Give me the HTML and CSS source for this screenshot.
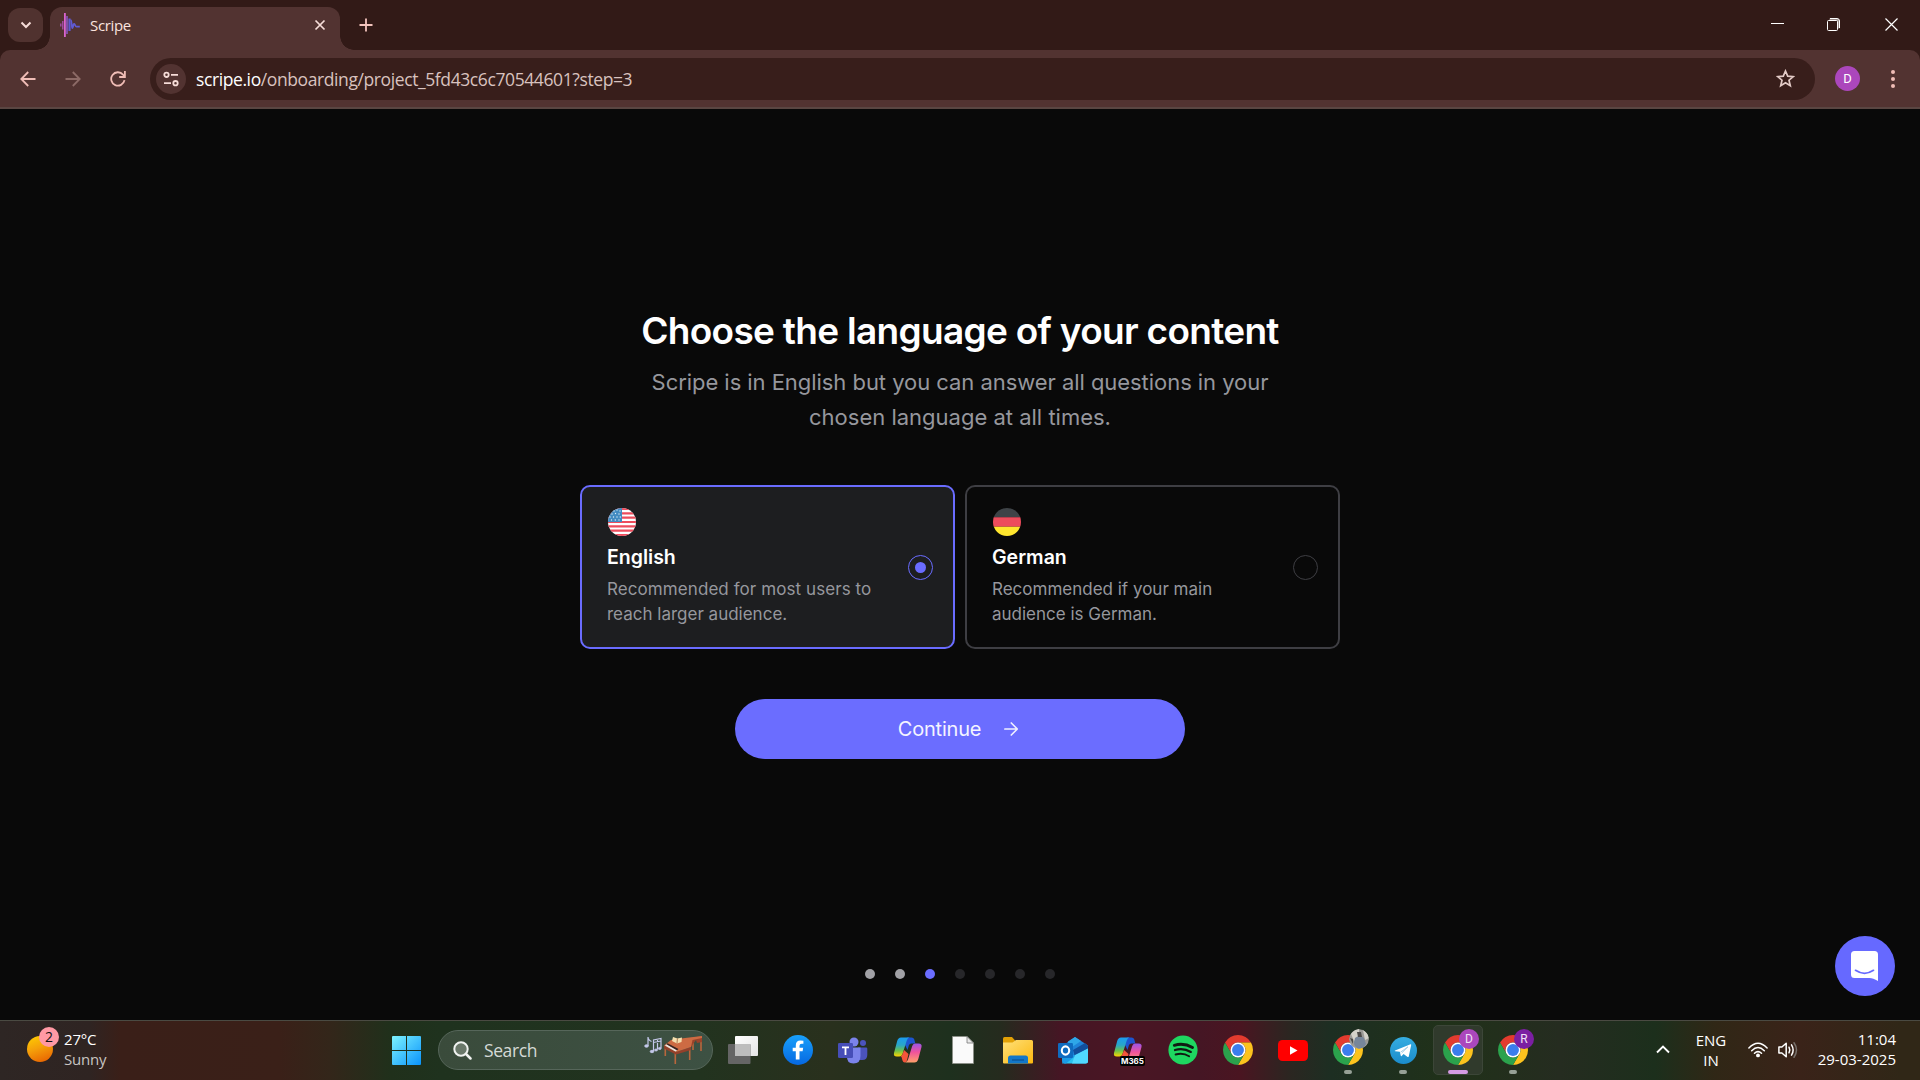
FILE: index.html
```html
<!DOCTYPE html>
<html lang="en">
<head>
<meta charset="utf-8">
<title>Scripe</title>
<link rel="stylesheet" href="styles.css">
</head>
<body>
<svg class="defs" width="0" height="0" aria-hidden="true">
  <defs>
    <linearGradient id="cpA" x1="0" y1="0" x2="0" y2="1"><stop offset="0" stop-color="#1b9cf0"/><stop offset=".4" stop-color="#2aa6c8"/><stop offset=".7" stop-color="#6cc24a"/><stop offset="1" stop-color="#ffd400"/></linearGradient>
    <linearGradient id="cpB" x1="0" y1="0" x2="0" y2="1"><stop offset="0" stop-color="#9a55e8"/><stop offset=".45" stop-color="#f0529c"/><stop offset="1" stop-color="#ffa06a"/></linearGradient>
    <symbol id="chrome" viewBox="2 2 44 44">
      <path fill="#e33b2e" d="M4.95 13A22 22 0 0 1 43.05 13H24A11 11 0 0 0 14.47 29.5Z"/>
      <path fill="#fcc31e" d="M43.05 13A22 22 0 0 1 24 46L33.53 29.5A11 11 0 0 0 24 13Z"/>
      <path fill="#2ba24c" d="M24 46A22 22 0 0 1 4.95 13L14.47 29.5A11 11 0 0 0 33.53 29.5Z"/>
      <circle cx="24" cy="24" r="11" fill="#fff"/><circle cx="24" cy="24" r="8.7" fill="#3b7ded"/>
    </symbol>
    <symbol id="copilot" viewBox="0 0 30 26">
      <path fill="#1d55d0" d="M14 0.5h4.5q2.2 0 2.8 2l1 4h-4q-1.8 0-2.4 1.8L14.5 13 11 6Z"/>
      <path fill="url(#cpA)" d="M8 .5h8.500q-2 .5-2.800 3.200L9.500 17q-.8 2.500-3.200 2.500H3.800Q.3 19.500 1 16L4.200 4Q5.200.5 8 .5Z"/>
      <path fill="#f4553a" d="M7.500 19.500Q9 19 9.800 16.500L11 13l4.500 4-1.200 5q-.7 3.500-2.600 3.500-1.700 0-2.200-2L8.500 20Z"/>
      <path fill="url(#cpB)" d="M22 6.500h3.500q3.800 0 3 3.500L25.300 22q-1 3.500-4 3.500h-9q2-.5 2.800-3.200L19.200 9q.8-2.500 2.800-2.500Z"/>
    </symbol>
  </defs>
</svg>

<header class="browser">
  <div class="tabstrip">
    <button class="tab-search"><svg width="12" height="8" viewBox="0 0 12 8"><path d="M1.500 1.500 6 6l4.500-4.500" fill="none" stroke="#f6dcd8" stroke-width="2"/></svg></button>
    <div class="tab">
      <svg class="favicon" width="20" height="24" viewBox="0 0 20 24" fill="none" stroke-width="1.300"><path stroke="#a94fb0" d="M.8 10.500v3M2.800 8v8.500"/><path stroke="#e067d8" stroke-width="1.700" d="M4.900 0v24"/><path stroke="#8a58c0" stroke-width="1.600" d="M7 3v18"/><path stroke="#5f5ad2" stroke-width="2.200" d="M9.500 5.500v12.500"/><path stroke="#5f5ad2" stroke-width="1.700" d="M10.500 7q1 0 1.200 4.500.3 4 .8 3.500.7-.5 1-3.500.6-1.500 1.300 0 .9 2.500 2.200 2.200h2.800"/></svg>
      <span class="tab-title">Scripe</span>
      <svg class="tab-close" width="12" height="12" viewBox="0 0 12 12"><path d="M1.500 1.500l9 9M10.500 1.500l-9 9" stroke="#f6dcd8" stroke-width="1.700"/></svg>
    </div>
    <svg class="new-tab" width="14" height="14" viewBox="0 0 14 14"><path d="M7 .5v13M.5 7h13" stroke="#f3c4bd" stroke-width="1.800"/></svg>
    <div class="window-controls">
      <svg width="13" height="13" viewBox="0 0 13 13"><path d="M0 5.500h13" stroke="#fff"/></svg>
      <svg width="13" height="13" viewBox="0 0 13 13" fill="none"><path d="M2.500 1.500h7q2 0 2 2v7" stroke="#998a88" stroke-width="2"/><path d="M3 .5h7q2.500 0 2.500 2.500v7M.5 3.500q0-1 1-1h8q1 0 1 1v8q0 1-1 1h-8q-1 0-1-1Z" stroke="#fff"/></svg>
      <svg width="13" height="13" viewBox="0 0 13 13"><path d="M.5.5l12 12M12.500.5l-12 12" stroke="#fff" stroke-width="1.200"/></svg>
    </div>
  </div>
  <div class="toolbar">
    <svg width="16" height="16" viewBox="0 0 16 16" fill="none" stroke="#f0bdb6" stroke-width="1.800"><path d="M15.500 8H1.500M8.200 1 1.300 8l6.900 7"/></svg>
    <svg width="16" height="16" viewBox="0 0 16 16" fill="none" stroke="#8c6a66" stroke-width="1.800"><path d="M.5 8h14M7.800 1l6.900 7-6.900 7"/></svg>
    <svg width="16" height="16" viewBox="0 0 16 16" fill="none" stroke="#f0bdb6" stroke-width="1.800"><path d="M14.500 9.200A6.700 6.700 0 1 1 13 3.600L14.800 5.500M14.900 0v6H9.200"/></svg>
    <div class="omnibox">
      <span class="site-info"><svg width="16" height="16" viewBox="0 0 16 16" fill="none" stroke="#f6dcd8" stroke-width="1.800"><circle cx="3.500" cy="3.800" r="2.200"/><path d="M8 3.800h7M1 12.200h7"/><circle cx="12.500" cy="12.200" r="2.200"/></svg></span>
      <span class="url"><b>scripe.io</b>/onboarding/project_5fd43c6c70544601?step=3</span>
      <svg class="star" width="19" height="19" viewBox="0 0 19 19"><path d="M9.500 2l2.200 5.100 5.500.5-4.200 3.600 1.300 5.500-4.800-2.900-4.800 2.900L6 11.200 1.800 7.600l5.500-.5Z" fill="none" stroke="#e2cac6" stroke-width="1.700"/></svg>
    </div>
    <span class="profile">D</span>
    <svg class="menu" width="4" height="18" viewBox="0 0 4 18" fill="#f0bdb6"><circle cx="2" cy="2" r="2"/><circle cx="2" cy="9" r="2"/><circle cx="2" cy="16" r="2"/></svg>
  </div>
</header>

<main class="page">
  <h1>Choose the language of your content</h1>
  <p class="subtitle"><span class="lead">Scripe is in English but you can answer all questions in your</span><br>chosen language at all times.</p>
  <div class="options">
    <div class="card selected">
      <div class="card-text">
        <svg class="flag" width="28" height="28" viewBox="0 0 28 28"><clipPath id="round"><circle cx="14" cy="14" r="14"/></clipPath><g clip-path="url(#round)"><path fill="#fff" d="M0 0h28v28H0z"/><path stroke="#ed4c5c" stroke-width="2.150" d="M0 1h28M0 5.300h28M0 9.600h28M0 14h28M0 18.300h28M0 22.600h28M0 27h28"/><path fill="#428bc1" d="M0 0h14v14H0z"/><g fill="#dcebf6"><circle cx="6" cy="3" r=".7"/><circle cx="9" cy="2" r=".7"/><circle cx="12" cy="3" r=".7"/><circle cx="4" cy="6" r=".7"/><circle cx="7.500" cy="5.500" r=".7"/><circle cx="11" cy="6" r=".7"/><circle cx="2" cy="9" r=".7"/><circle cx="5.500" cy="9" r=".7"/><circle cx="9" cy="9" r=".7"/><circle cx="12.300" cy="9" r=".7"/><circle cx="3.500" cy="12" r=".7"/><circle cx="7.300" cy="12" r=".7"/><circle cx="11" cy="12" r=".7"/></g></g></svg>
        <h2>English</h2>
        <p><span class="wide">Recommended for most users to</span><br>reach larger audience.</p>
      </div>
      <span class="radio"></span>
    </div>
    <div class="card">
      <div class="card-text">
        <svg class="flag" width="28" height="28" viewBox="0 0 28 28"><g clip-path="url(#round)"><path fill="#3e4347" d="M0 0h28v9.300H0z"/><path fill="#ed4c5c" d="M0 9.300h28v9.400H0z"/><path fill="#ffe62e" d="M0 18.700h28V28H0z"/></g></svg>
        <h2>German</h2>
        <p>Recommended if your main<br>audience is German.</p>
      </div>
      <span class="radio"></span>
    </div>
  </div>
  <button class="continue"><span>Continue</span><svg width="14" height="14" viewBox="0 0 14 14" fill="none" stroke="#f0f0ff" stroke-width="1.700" stroke-linecap="round" stroke-linejoin="round"><path d="M.9 7h12.200M7.300 1l6 6-6 6"/></svg></button>
  <div class="steps"><i class="done"></i><i class="done"></i><i class="now"></i><i></i><i></i><i></i><i></i></div>
  <div class="chat"><svg width="28" height="30" viewBox="0 0 28 30"><path fill="#fff" d="M3.500 0h20Q27 0 27 3.500V30q-5-3-8.500-3h-15Q0 27 0 23.500v-20Q0 0 3.500 0Z"/><path d="M4.500 19.300q9 6 18 0" fill="none" stroke="#6669ff" stroke-width="1.700" stroke-linecap="round"/></svg></div>
</main>

<footer class="taskbar">
  <div class="weather">
    <span class="sun"><span class="count">2</span></span>
    <div class="weather-text"><span class="temp">27°C</span><span class="cond">Sunny</span></div>
  </div>
  <svg class="start" width="29" height="29" viewBox="0 0 29 29"><defs><linearGradient id="win" gradientUnits="userSpaceOnUse" x1="0" y1="0" x2="29" y2="29"><stop offset="0" stop-color="#7df3ff"/><stop offset="1" stop-color="#0a93fb"/></linearGradient></defs><path fill="url(#win)" d="M1 0h13v14H0V1q0-1 1-1ZM15 0h13q1 0 1 1v13H15ZM0 15h14v14H1q-1 0-1-1ZM15 15h14v13q0 1-1 1H15Z"/></svg>
  <div class="search">
    <svg width="19" height="19" viewBox="0 0 19 19" fill="none" stroke="#f1f3f1"><circle cx="8" cy="8" r="6.700" fill="#6a786a" stroke-width="2"/><path d="M13 13l4.500 4.500" stroke-width="2.500" stroke-linecap="round"/></svg>
    <span class="search-label">Search</span>
    <svg class="piano" width="59" height="30" viewBox="0 0 59 30">
      <g fill="#c4c8ea" stroke="#c4c8ea" stroke-width=".8"><path fill="none" stroke-width="1.200" d="M5 11V2q0 3 3.500 4.500M10.500 16V5l7.500-1.500v9.500M14.500 14.500V5M10.500 7.500l7.500-1.500"/><ellipse cx="3.500" cy="11" rx="1.800" ry="1.300"/><ellipse cx="9" cy="16.500" rx="1.800" ry="1.200"/><ellipse cx="13" cy="15" rx="1.500" ry="1"/><ellipse cx="16.700" cy="13.500" rx="1.500" ry="1"/></g>
      <path stroke="#b9663c" stroke-width="1.600" d="M22.300 13v8M32.300 18v11M46.700 13v12M58 6v10M50 8v7"/>
      <path fill="#94402a" d="M21 10.500l12 6.500v2.500l-12-6ZM33 17l15-5v3l-15 4.500Z"/>
      <path fill="#9a432a" d="M47 3l12-2v6l-5 1-1-3-5 7Z"/>
      <path fill="#cd6b43" d="M21 10.500l12 6.500 15-5 1.500-7L59 3V1L42 3 28 5Z"/>
      <path fill="#e9e6e4" d="M22 10.500l1.500-1.300 10.500 6-1.500 1.200Z"/><path fill="#352421" d="M23.500 9.200l1-.9L35.500 14l-1.500 1.200Z"/>
      <path fill="#f4dfae" d="M30 2l4.500 1.500L39 2.500l-.5 4.500-4.500 1.500-5-2.500Z"/><path stroke="#9a5b35" stroke-width=".8" d="M34.400 3.500 34 8.300"/>
    </svg>
  </div>
  <div class="apps">
    <span class="app"><svg width="30" height="28" viewBox="0 0 30 28"><defs><linearGradient id="tv" x1="0" y1="0" x2="1" y2="1"><stop offset="0" stop-color="#fff"/><stop offset="1" stop-color="#e4e4e4"/></linearGradient></defs><rect x="7" y="0" width="23" height="20" rx="1" fill="url(#tv)"/><rect x="0" y="8" width="22.500" height="20" rx="1" fill="#656565"/><path fill="#bdbdbd" d="M7 8h15.500v12H7z"/></svg></span>
    <span class="app"><svg width="30" height="30" viewBox="0 0 30 30"><defs><linearGradient id="fb" x1="0" y1="0" x2="0" y2="1"><stop offset="0" stop-color="#18a0fb"/><stop offset="1" stop-color="#0668e1"/></linearGradient></defs><circle cx="15" cy="15" r="15" fill="url(#fb)"/><path fill="#fff" d="M12.800 24.500v-8.300H9.700v-3.500h3.100v-2.500q0-4.700 4.600-4.700 1.600 0 3 .3v3h-1.700q-2.200 0-2.200 2v1.900h3.700l-.6 3.500h-3.100v8.300Z"/></svg></span>
    <span class="app"><svg width="30" height="27" viewBox="0 0 30 27"><circle cx="25" cy="6" r="3" fill="#4b53bc"/><circle cx="16" cy="5" r="4.500" fill="#7b83eb"/><path fill="#4b53bc" d="M20 10.500h8q1.300 0 1.300 1.300V18q0 5-5 5H20Z"/><path fill="#7b83eb" d="M9 10.500h13.500V19q0 7.500-7 7.500T9 19Z"/><rect x="0" y="6" width="15" height="15" rx="1.300" fill="#464eb8"/><path fill="#fff" d="M4 9.500h7v1.700H8.400V18H6.600v-6.800H4Z"/></svg></span>
    <span class="app"><svg width="30" height="26"><use href="#copilot"/></svg></span>
    <span class="app"><svg width="22" height="28" viewBox="0 0 22 28"><path fill="#fafafa" stroke="#8b8f88" stroke-width=".8" d="M.5.500h14.500l6.500 6.500v20.500H.5Z"/><path fill="#e8e8e8" stroke="#777" stroke-width=".8" d="M15 .5V7h6.500Z"/></svg></span>
    <span class="app"><svg width="30" height="27" viewBox="0 0 30 27"><defs><linearGradient id="fd" x1="0" y1="0" x2="1" y2="1"><stop offset="0" stop-color="#ffe07a"/><stop offset="1" stop-color="#fbb80f"/></linearGradient></defs><path fill="#e2a006" d="M0 1.500Q0 0 1.500 0H9l3.500 4v3H0Z"/><path fill="url(#fd)" d="M0 5.500h9.500L13 3h15.500Q30 3 30 4.500v21q0 1-1 1H1q-1 0-1-1Z"/><path fill="#1277c9" d="M5 26.500V21q0-2.500 2.500-2.500h15q2.500 0 2.500 2.500v5.500Z"/><path stroke="#0b4f91" stroke-width="1.200" d="M9 23h12"/></svg></span>
    <span class="app"><svg width="30" height="27" viewBox="0 0 30 27"><path fill="#1f83d8" d="M5 8.500 17 0l13 8.500-14 10Z"/><path fill="#2ea7e8" d="M10 4.500 17 0l6 4-12 8Z"/><path fill="#124f9c" d="M15 13 27 6l3 3v4l-13 7Z"/><path fill="#28c3f0" d="M4 26.500 30 11.500V24q0 2.500-2.500 2.500H6.500Q4 26.500 4 24Z"/><path fill="#1a9be6" d="M4 14l14 4.500L8 26.500H6.500Q4 26.500 4 24Z"/><path fill="#50d9ff" d="M17 18l13-6.500V24q0 2.500-2.500 2.500H14Z"/><rect y="6" width="15" height="15" rx="1.300" fill="#0f6cc0"/><ellipse cx="7.500" cy="13.500" rx="3.700" ry="4.100" fill="none" stroke="#fff" stroke-width="2.100"/></svg></span>
    <span class="app"><svg width="30" height="26"><use href="#copilot"/></svg><span class="m365">M365</span></span>
    <span class="app"><svg width="30" height="30" viewBox="0 0 30 30"><circle cx="15" cy="15" r="14.600" fill="#1ed760"/><path fill="none" stroke="#101a12" stroke-linecap="round" d="M6.300 10.300q9.500-2.800 18.200 2.200" stroke-width="2.900"/><path fill="none" stroke="#101a12" stroke-linecap="round" d="M7 15q8.500-2.400 15.800 1.900" stroke-width="2.300"/><path fill="none" stroke="#101a12" stroke-linecap="round" d="M7.600 19.500q7.500-2 13.500 1.700" stroke-width="1.900"/></svg></span>
    <span class="app"><svg width="30" height="30"><use href="#chrome"/></svg></span>
    <span class="app"><svg width="30" height="21" viewBox="0 0 30 21"><rect width="30" height="21" rx="4.500" fill="#f00"/><path fill="#fff" d="M12 6.300v8.400l7.500-4.200Z"/></svg></span>
    <span class="app running"><svg width="30" height="30"><use href="#chrome"/></svg><svg class="badge" width="20" height="20" viewBox="0 0 20 20"><circle cx="10" cy="10" r="10" fill="#9b9a97"/><path fill="#d4d2ca" d="M2 5q4-5 8-5v7L5 12ZM14 1q5 3 6 8l-4 2Z"/><path fill="#77869a" d="M6 9q5-4 9 0l2 6q-3 5-8 4.500Q5 17 5 14Z"/><path fill="#4c4a48" d="M8 3h4l1 5H9ZM1 9l3 1v5Z"/></svg></span>
    <span class="app running"><svg width="27" height="27" viewBox="0 0 27 27"><defs><linearGradient id="tg" x1="0" y1="0" x2="0" y2="1"><stop offset="0" stop-color="#35ade1"/><stop offset="1" stop-color="#1b8ccb"/></linearGradient></defs><circle cx="13.500" cy="13.500" r="13.500" fill="url(#tg)"/><path fill="#fff" d="M5 13.500 20.500 7.300Q21.300 7 21.200 8l-2.400 11.200q-.4 1.300-1.500.6l-3.700-2.700-2 1.900q-.6.500-.8-.3l-1-4-4.600-.5Q4.300 14 5 13.500Z"/><path stroke="#a9cfe6" d="M10.500 15.200l7.500-5.400-6.300 6.200"  fill="none"/></svg></span>
    <span class="app running active"><svg width="30" height="30"><use href="#chrome"/></svg><span class="badge purple">D</span></span>
    <span class="app running"><svg width="30" height="30"><use href="#chrome"/></svg><span class="badge violet">R</span></span>
  </div>
  <div class="tray">
    <svg class="caret" width="14" height="9" viewBox="0 0 14 9"><path d="M1 7.500 7 1.500l6 6" fill="none" stroke="#fff" stroke-width="1.900"/></svg>
    <div class="lang"><span>ENG</span><span>IN</span></div>
    <svg class="wifi" width="20" height="16" viewBox="0 0 20 16" fill="none" stroke="#fff" stroke-width="1.500" stroke-linecap="round"><path d="M.9 6q9.100-9.500 18.200 0M3.700 8.700q6.300-6.300 12.600 0M6.500 11.300q3.500-3.400 7 0"/><circle cx="10" cy="13.400" r="1.200" fill="#fff"/></svg>
    <svg class="volume" width="20" height="18" viewBox="0 0 20 18" fill="none" stroke="#fff" stroke-width="1.500" stroke-linecap="round" stroke-linejoin="round"><path d="M.9 6v6h3l4.300 3.800V2.200L3.900 6ZM11 6.200q1.600 2.800 0 5.600M13.500 3.800q3.300 5.200 0 10.400"/><path stroke="#77706b" d="M16 1.800q5 7.200 0 14.400"/></svg>
    <div class="clock"><span class="time">11:04</span><span class="date">29-03-2025</span></div>
  </div>
</footer>
</body>
</html>
```
FILE: styles.css
```css
* { box-sizing: border-box; }
body { margin: 0; width: 1920px; height: 1080px; overflow: hidden; background: #090909; display: flex; flex-direction: column; font-family: "Open Sans", "Noto Sans", sans-serif; color: #fff; }
svg { display: block; flex: none; }
.defs { position: absolute; }
button { border: 0; padding: 0; font: inherit; color: inherit; }
h1, h2, p { margin: 0; font-weight: 400; }

/* Browser frame */
.browser { flex: none; height: 109px; background: #321a17; }
.tabstrip { height: 50px; display: flex; align-items: flex-start; padding-left: 8px; }
.tab-search { width: 35px; height: 34px; margin-top: 8px; border-radius: 12px; background: #50322f; display: flex; align-items: center; justify-content: center; }
.tab { position: relative; width: 290px; height: 43px; margin: 7px 0 0 7px; padding: 0 14px 8px 10px; border-radius: 12px 12px 0 0; background: #523331; display: flex; align-items: center; }
.tab::before, .tab::after { content: ""; position: absolute; bottom: 0; width: 14px; height: 14px; }
.tab::before { left: -14px; background: radial-gradient(circle at 0 0, transparent 13.500px, #523331 14px); }
.tab::after { right: -14px; background: radial-gradient(circle at 100% 0, transparent 13.500px, #523331 14px); }
.tab-title { flex: 1; margin-left: 10px; font-size: 15px; line-height: 20px; letter-spacing: -.35px; color: #fbe3df; }
.new-tab { margin: 18px 0 0 19px; }
.window-controls { margin-left: auto; padding: 18px 22px 0 0; display: flex; gap: 43px; }
.window-controls svg:last-child { margin-left: 2px; }
.toolbar { height: 59px; padding: 0 25px 0 20px; border-bottom: 2px solid #5a4642; border-radius: 10px 10px 0 0; background: #523331; display: flex; align-items: center; }
.toolbar > svg + svg { margin-left: 29px; }
.omnibox { width: 1665px; height: 42px; margin-left: 24px; padding: 0 20px 0 6px; border-radius: 21px; background: #381e1b; display: flex; align-items: center; }
.site-info { width: 30px; height: 30px; border-radius: 50%; background: #523331; display: flex; align-items: center; justify-content: center; }
.url { flex: 1; margin-left: 10px; font-size: 17.500px; line-height: 24px; letter-spacing: -.4px; color: #d9c2bf; }
.url b { font-weight: 400; color: #fff; }
.profile { width: 25px; height: 25px; margin-left: 20px; border-radius: 50%; background: #ab47bc; font: 13px/25px Roboto, sans-serif; text-align: center; }
.menu { margin-left: auto; }

/* Onboarding page */
.page { position: relative; flex: 1; padding-top: 199px; display: flex; flex-direction: column; align-items: center; font-family: Inter, "Liberation Sans", sans-serif; }
h1 { font-size: 37px; line-height: 46px; font-weight: 600; letter-spacing: -.7px; white-space: nowrap; }
.subtitle { margin-top: 11px; font-size: 22px; line-height: 35px; color: #96979d; text-align: center; white-space: nowrap; }
.lead { letter-spacing: -.05px; }
.options { margin-top: 50px; display: flex; gap: 10px; }
.card { width: 375px; height: 164px; padding: 21px 20px 0 25px; border: 2px solid #3e3e43; border-radius: 10px; display: flex; justify-content: space-between; }
.card.selected { border-color: #6a6cff; background: #1d1e20; }
.flag { margin-left: 1px; }
.card h2 { margin-top: 8px; font-size: 19.500px; line-height: 26px; font-weight: 600; }
.card p { margin-top: 7px; font-size: 17px; line-height: 25px; color: #96979d; white-space: nowrap; }
.wide { letter-spacing: .08px; }
.radio { width: 25px; height: 25px; margin-top: 47px; border: 1px solid #3e3e43; border-radius: 50%; display: flex; align-items: center; justify-content: center; }
.selected .radio { border-color: #6a6cff; }
.selected .radio::after { content: ""; width: 11px; height: 11px; border-radius: 50%; background: #6a6cff; }
.continue { width: 450px; height: 60px; margin-top: 50px; padding-right: 4px; border-radius: 30px; background: #6b6dff; color: #f4f4ff; display: flex; align-items: center; justify-content: center; gap: 23px; font-size: 20px; line-height: 30px; letter-spacing: -.2px; }
.steps { margin-top: 210px; display: flex; gap: 20px; }
.steps i { width: 10px; height: 10px; border-radius: 50%; background: #27272a; }
.steps .done { background: #a1a1a6; }
.steps .now { background: #6b6dff; }
.chat { position: absolute; right: 25px; bottom: 24px; width: 60px; height: 60px; border-radius: 50%; background: #6669ff; display: flex; align-items: center; justify-content: center; }

/* Taskbar */
.taskbar { flex: none; height: 60px; border-top: 1px solid #4a4a42; display: flex; background: linear-gradient(90deg, #2e2624 0, #2f2422 90px, #3a1f18 120px, #3a2018 280px, #33261a 330px, #20301b 390px, #1f321e 440px, #22331f 700px, #29301d 830px, #1e301e 950px, #252b1e 1000px, #451624 1060px, #4a1624 1130px, #451624 1200px, #4a1521 1240px, #2b2621 1290px, #1d2e22 1330px, #203119 1450px, #252c20 1560px, #1c2f1c 1655px, #302716 1715px, #3a2319 1800px, #302717 1900px); }
.weather { width: 365px; padding-left: 27px; display: flex; }
.sun { position: relative; width: 26px; height: 26px; margin-top: 15px; border-radius: 50%; background: linear-gradient(160deg, #ffd000, #f5a00a 45%, #e65a00); }
.count { position: absolute; left: 12px; top: -9px; width: 20px; height: 20px; border-radius: 50%; background: #ff99a4; color: #111; font-size: 14px; line-height: 20px; text-align: center; }
.weather-text { margin: 8px 0 0 11px; display: flex; flex-direction: column; font-size: 15px; line-height: 20px; letter-spacing: -.2px; }
.cond { color: #c9c5c3; }
.start { margin: 15px 0 0 27px; }
.search { width: 275px; height: 40px; margin: 9px 0 0 17px; padding: 0 10px 0 14px; border: 1px solid #56665a; border-radius: 20px; background: linear-gradient(90deg, #3a4b3b, #3d5143); display: flex; align-items: center; }
.search-label { flex: 1; margin-left: 12px; font-size: 17.500px; line-height: 24px; letter-spacing: -.4px; color: #d5dad6; }
.apps { display: flex; }
.app { position: relative; width: 50px; height: 50px; margin: 4px 0 0 5px; border-radius: 5px; display: flex; align-items: center; justify-content: center; }
.running::after { content: ""; position: absolute; left: 21px; bottom: 1px; width: 8px; height: 4px; border-radius: 2px; background: #96a096; }
.active { background: #303a2c; border: 1px solid #3c4638; }
.active::after { left: 14px; bottom: 0; width: 20px; background: #d59be3; }
.badge { position: absolute; left: 26px; top: 4px; width: 20px; height: 20px; border-radius: 50%; font: 12px/20px Roboto, sans-serif; text-align: center; color: #f0e0f5; }
.active .badge { left: 25px; top: 3px; }
.purple { background: #ab47bc; }
.violet { background: #7b1fa2; }
.m365 { position: absolute; left: 17px; top: 31px; height: 10px; padding: 0 1px; border-radius: 2px; background: #000; font: 700 8px/10px Inter, sans-serif; }
.tray { margin-left: auto; padding-right: 24px; display: flex; font-size: 15px; line-height: 20px; }
.caret { margin-top: 24px; }
.lang { width: 50px; margin: 9px 0 0 16px; display: flex; flex-direction: column; align-items: center; }
.wifi { margin: 21px 0 0 12px; }
.volume { margin: 20px 0 0 10px; }
.clock { width: 98px; margin-top: 8px; display: flex; flex-direction: column; align-items: flex-end; }
```
